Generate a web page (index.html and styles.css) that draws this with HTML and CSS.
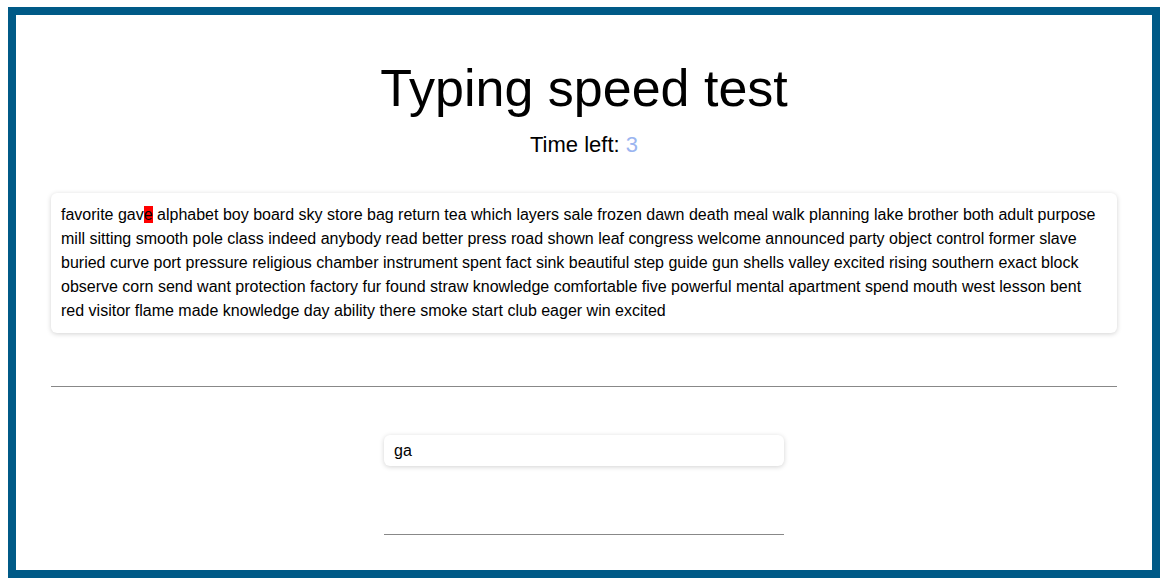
FILE: index.html
```html
<!DOCTYPE html>
<html>
<head>
<meta charset="utf-8">
<title>Typing speed test</title>
<link rel="stylesheet" href="styles.css">
</head>
<body>
<div class="frame">
  <h1 class="title">Typing speed test</h1>
  <div class="timer">Time left: <span class="time">3</span></div>
  <div class="words">favorite gav<span class="current">e</span> alphabet boy board sky store bag return tea which layers sale frozen dawn death meal walk planning lake brother both adult purpose mill sitting smooth pole class indeed anybody read better press road shown leaf congress welcome announced party object control former slave buried curve port pressure religious chamber instrument spent fact sink beautiful step guide gun shells valley excited rising southern exact block observe corn send want protection factory fur found straw knowledge comfortable five powerful mental apartment spend mouth west lesson bent red visitor flame made knowledge day ability there smoke start club eager win excited</div>
  <hr class="rule">
  <div class="entry">
    <input class="typing" type="text" value="ga">
    <hr class="rule small">
  </div>
</div>
</body>
</html>
```

FILE: styles.css
```css
html, body {
  margin: 0;
  padding: 0;
  background: #fff;
}
body {
  padding: 7px 6px 10px 8px;
  font-family: "Liberation Sans", Arial, sans-serif;
  color: #000;
}
.frame {
  border: 8px solid #005a87;
  height: 555px;
  padding: 0 35px;
  display: flex;
  flex-direction: column;
  align-items: stretch;
}
.title {
  margin: 41px 0 0 0;
  font-size: 52px;
  font-weight: normal;
  line-height: 64px;
  text-align: center;
}
.timer {
  margin-top: 12px;
  font-size: 22px;
  line-height: 26px;
  text-align: center;
}
.time {
  color: #9bb5f0;
}
.words {
  margin-top: 35px;
  padding: 10px 10px 10px 10px;
  font-size: 16px;
  line-height: 24px;
  border-radius: 6px;
  box-shadow: 0 1px 5px rgba(0, 0, 0, 0.18);
}
.current {
  background: #ff0000;
}
.rule {
  margin: 53px 0 0 0;
  border: 0;
  border-top: 1px solid #888;
  height: 0;
}
.entry {
  align-self: center;
  width: 400px;
  margin-top: 48px;
  display: flex;
  flex-direction: column;
}
.typing {
  height: 31px;
  box-sizing: border-box;
  border: 0;
  outline: none;
  border-radius: 6px;
  box-shadow: 0 1px 5px rgba(0, 0, 0, 0.18);
  padding: 0 10px;
  font-family: "Liberation Sans", Arial, sans-serif;
  font-size: 16px;
  color: #000;
  background: #fff;
}
.rule.small {
  margin-top: 68px;
}
```
